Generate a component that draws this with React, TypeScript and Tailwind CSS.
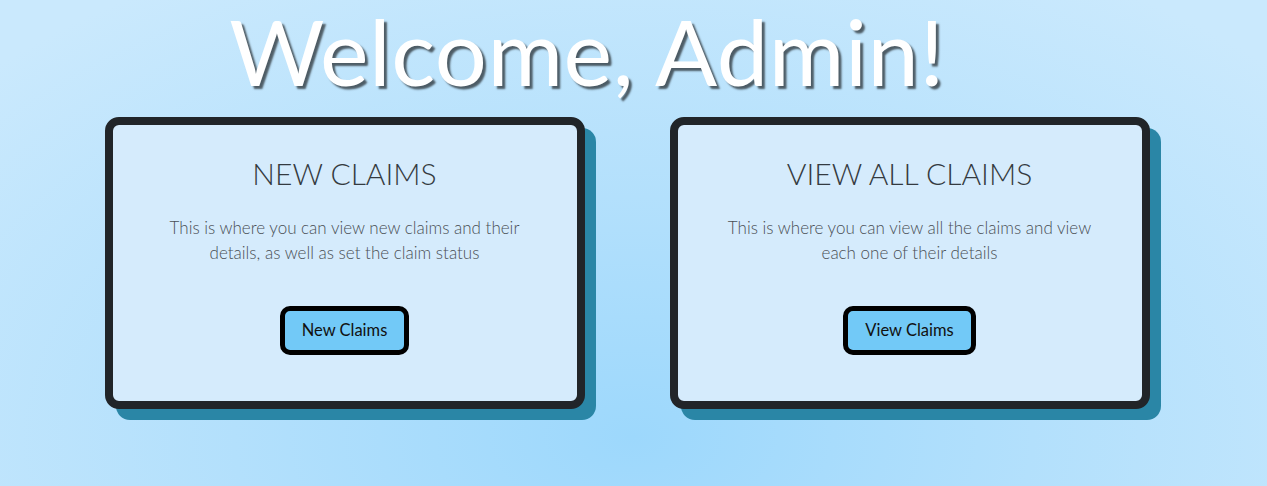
import React from "react";

function Card({ title, text, button }: { title: string; text: string; button: string }) {
  return (
    <div className="w-[480px] h-[292px] border-8 border-[#212529] rounded-[14px] bg-[#d5ebfc] shadow-[11px_11px_0_#2a86a6] flex flex-col items-center">
      <h2 className="mt-[30px] text-[30px] leading-[36px] font-light text-[#343a40]">{title}</h2>
      <p className="mt-[24px] w-[374px] text-center text-[17px] leading-[25px] font-light text-[#4a4f55]">{text}</p>
      <button className="mt-[41px] h-[49px] px-[17px] border-[5px] border-black rounded-[10px] bg-[#72c9f7] text-[16.5px] text-[#111]">
        {button}
      </button>
    </div>
  );
}

export default function App() {
  return (
    <div
      className="w-[1267px] h-[486px] overflow-hidden bg-[radial-gradient(ellipse_70%_110%_at_50%_90%,#9dd8fc_0%,#b3e0fc_45%,#cae9fd_100%)]"
      style={{ fontFamily: "Lato, 'Open Sans', sans-serif" }}
    >
      <h1 className="pt-[5px] pr-[93px] text-center text-[92px] leading-[92px] font-normal tracking-[0.5px] text-white [text-shadow:3px_3px_2px_rgba(0,0,0,0.6)]">
        Welcome, Admin!
      </h1>
      <div className="mt-[20px] flex justify-center gap-[85px] pr-[13px]">
        <Card
          title="NEW CLAIMS"
          text="This is where you can view new claims and their details, as well as set the claim status"
          button="New Claims"
        />
        <Card
          title="VIEW ALL CLAIMS"
          text="This is where you can view all the claims and view each one of their details"
          button="View Claims"
        />
      </div>
    </div>
  );
}
